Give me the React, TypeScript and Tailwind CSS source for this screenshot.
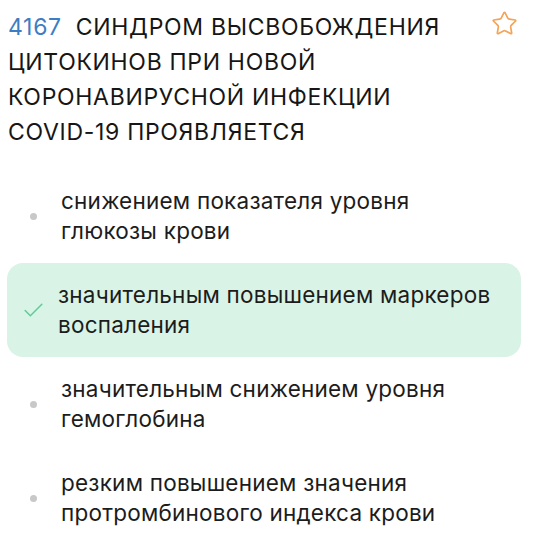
import { Star, Check } from "lucide-react";

type Option = {
  text: string;
  correct?: boolean;
};

const options: Option[] = [
  { text: "снижением показателя уровня глюкозы крови" },
  { text: "значительным повышением маркеров воспаления", correct: true },
  { text: "значительным снижением уровня гемоглобина" },
  { text: "резким повышением значения протромбинового индекса крови" },
];

function OptionRow({ option }: { option: Option }) {
  if (option.correct) {
    return (
      <li className="flex h-[94px] items-center rounded-[16px] bg-[#d9f3e6] pl-[14px] pr-3">
        <Check className="h-[25px] w-[25px] shrink-0 text-[#5dcc95]" strokeWidth={1.4} />
        <span className="ml-[12px] max-w-[445px] text-[22.5px] leading-[30px] tracking-[0.01em] text-[#1c1c1c]">
          {option.text}
        </span>
      </li>
    );
  }
  return (
    <li className="flex h-[94px] items-center pl-[23px] pr-3">
      <span className="h-[7px] w-[7px] shrink-0 rounded-full bg-[#c8c8c8]" />
      <span className="ml-[24px] max-w-[440px] text-[22.5px] leading-[30px] tracking-[0.01em] text-[#1c1c1c]">
        {option.text}
      </span>
    </li>
  );
}

export default function App() {
  return (
    <div className="min-h-[548px] w-[536px] bg-white font-['Inter',sans-serif] antialiased">
      <div className="flex items-start pl-2 pr-[18px] pt-[10px]">
        <h1 className="w-[470px] text-[23px] leading-[35px] font-normal tracking-[0.03em] text-[#161616]">
          <span className="mr-[14px] text-[#3b7ec3]">4167</span>
          <span>
            СИНДРОМ ВЫСВОБОЖДЕНИЯ ЦИТОКИНОВ ПРИ НОВОЙ КОРОНАВИРУСНОЙ ИНФЕКЦИИ COVID-19 ПРОЯВЛЯЕТСЯ
          </span>
        </h1>
        <Star
          className="ml-auto mt-0 h-[27px] w-[27px] shrink-0 text-[#f4a457]"
          strokeWidth={1.5}
        />
      </div>
      <ul className="ml-[7px] mr-[15px] mt-[19px] flex flex-col">
        {options.map((o) => (
          <OptionRow key={o.text} option={o} />
        ))}
      </ul>
    </div>
  );
}
